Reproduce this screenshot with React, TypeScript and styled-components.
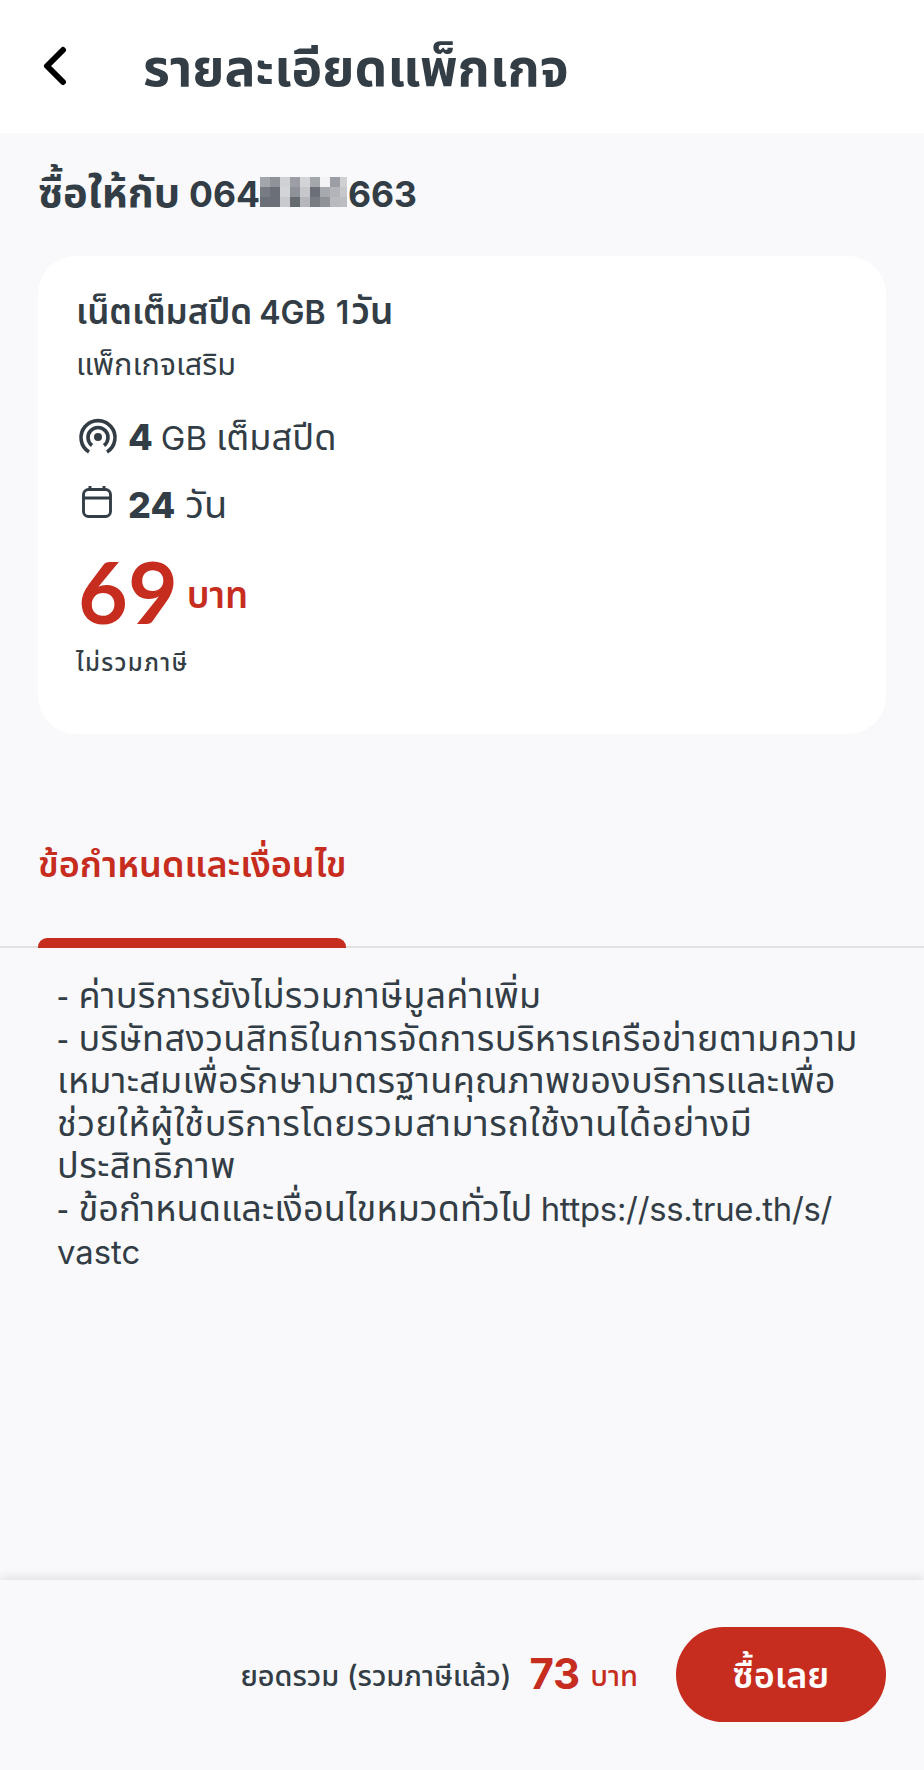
import React from "react";
import styled, { createGlobalStyle } from "styled-components";

const ink = "#333d45";
const red = "#c62d1f";
const page = "#f9f9fb";

const GlobalStyle = createGlobalStyle`
  * { box-sizing: border-box; }
  body { margin: 0; background: ${page}; }
`;

const Screen = styled.main`
  display: flex;
  flex-direction: column;
  width: 924px;
  height: 1770px;
  overflow: hidden;
  background: ${page};
  color: ${ink};
  font-family: "Inter", "Noto Sans Thai", "Noto Sans", sans-serif;
`;

const Header = styled.header`
  display: flex;
  align-items: center;
  height: 133px;
  padding: 0 40px;
  background: #fff;
`;

const BackButton = styled.button`
  display: flex;
  width: 103px;
  padding: 0 0 2px;
  border: 0;
  background: none;
`;

const Text = styled.span<{ $size: number; $track?: number; $weight?: number; $color?: string; $font?: string; $line?: number; $before?: number; $drop?: number }>`
  margin: ${(p) => p.$drop ?? 0}px 0 0 ${(p) => p.$before ?? 0}px;
  font-size: ${(p) => p.$size}px;
  line-height: ${(p) => p.$line ?? 40}px;
  letter-spacing: ${(p) => p.$track ?? 0}px;
  font-weight: ${(p) => p.$weight ?? 400};
  color: ${(p) => p.$color ?? "inherit"};
  white-space: pre;
  ${(p) => p.$font && `font-family: "${p.$font}", sans-serif;`}
`;

const Recipient = styled.h2`
  display: flex;
  align-items: baseline;
  height: 123px;
  margin: 0;
  padding: 39px 38px 0;
`;

const PhonePrefix = styled.span`
  display: flex;
  width: 222px;
  align-items: baseline;
  justify-content: space-between;
`;

const Mosaic = styled.svg`
  display: block;
  width: 87px;
  height: 30px;
  margin: 5px 1px 0 0;
  align-self: flex-start;
`;

const Card = styled.section`
  display: flex;
  flex-direction: column;
  height: 478px;
  margin: 0 38px;
  padding: 35px 38px;
  border-radius: 38px;
  background: #fff;
`;

const Row = styled.div<{ $height: number; $align?: string }>`
  display: flex;
  align-items: ${(p) => p.$align ?? "baseline"};
  height: ${(p) => p.$height}px;
`;

const IconSlot = styled.span`
  display: flex;
  align-self: flex-start;
  width: 52px;
  height: 40px;
  padding-left: 2px;
`;

const TabBar = styled.nav`
  display: flex;
  height: 214px;
  padding: 0 38px;
  border-bottom: 2px solid #e1e1e4;
`;

const Tab = styled.div`
  display: flex;
  flex-direction: column;
  justify-content: space-between;
  width: 308px;
  padding-top: 110px;
`;

const TabMarker = styled.div`
  height: 10px;
  margin-bottom: -2px;
  border-radius: 9px 9px 0 0;
  background: ${red};
`;

const Terms = styled.div`
  display: flex;
  flex-direction: column;
  flex: 1;
  padding: 26px 57px 0;
`;

const Footer = styled.footer`
  display: flex;
  align-items: flex-start;
  justify-content: flex-end;
  height: 190px;
  padding: 47px 38px 0;
  box-shadow: 0 -3px 10px rgba(0, 0, 0, 0.1);
  background: ${page};
`;

const Total = styled.div`
  display: flex;
  align-items: flex-start;
  padding-top: 27px;
  margin-right: 38px;
`;

const BuyButton = styled.button`
  width: 210px;
  height: 95px;
  padding: 0;
  border: 0;
  border-radius: 48px;
  background: ${red};
  color: #fff;
  font-family: inherit;
`;

const mosaic = [
  ["#a3a6ab", "#8f9399", "#d0d1d5", "#9b9ea4", "#d3d4d8", "#a4a7ac", "#f3f3f6", "#9b9ea4", "#cfd0d4"],
  ["#777c84", "#6b7078", "#d3d4d8", "#8f9399", "#c5c7cb", "#6b7078", "#a6a9ae", "#b2b4b9", "#c5c7cb"],
  ["#6b7078", "#6b7078", "#c9cacf", "#666b72", "#b5b7bc", "#787d84", "#8f9399", "#b8babf", "#bbbdc2"],
];

type Term = { bullet?: boolean; thai?: string; latin?: string; track?: number };

const terms: Term[] = [
  { bullet: true, thai: "ค่าบริการยังไม่รวมภาษีมูลค่าเพิ่ม", track: 0.26 },
  { bullet: true, thai: "บริษัทสงวนสิทธิในการจัดการบริหารเครือข่ายตามความ", track: 0.43 },
  { thai: "เหมาะสมเพื่อรักษามาตรฐานคุณภาพของบริการและเพื่อ", track: 0.3 },
  { thai: "ช่วยให้ผู้ใช้บริการโดยรวมสามารถใช้งานได้อย่างมี", track: 0.52 },
  { thai: "ประสิทธิภาพ", track: 0.4 },
  { bullet: true, thai: "ข้อกำหนดและเงื่อนไขหมวดทั่วไป ", latin: "https://ss.true.th/s/", track: 0.12 },
  { latin: "vastc" },
];

export default function App() {
  return (
    <Screen>
      <GlobalStyle />
      <Header>
        <BackButton aria-label="ย้อนกลับ">
          <svg width="30" height="40" viewBox="0 0 30 40" fill="none" stroke="#000" strokeWidth="6" strokeLinecap="round" strokeLinejoin="round">
            <path d="M23 4 7 20 23 36" />
          </svg>
        </BackButton>
        <Text as="h1" $size={51.8} $weight={700} $line={60}>รายละเอียดแพ็กเกจ</Text>
      </Header>
      <Recipient>
        <PhonePrefix>
          <Text $size={41.6} $weight={700}>ซื้อให้กับ</Text>
          <Text $size={35.5} $weight={700}>064</Text>
        </PhonePrefix>
        <Mosaic viewBox="0 0 87 30" shapeRendering="crispEdges">
          {mosaic.map((r, y) => r.map((c, x) => <rect key={`${x}-${y}`} x={x * 10} y={y * 10} width="10" height="10" fill={c} />))}
        </Mosaic>
        <Text $size={35.5} $weight={700}>663</Text>
      </Recipient>
      <Card>
        <Row $height={53}>
          <Text $size={35} $weight={600}>เน็ตเต็มสปีด</Text>
          <Text $size={32} $weight={600} $before={7}>4GB</Text>
          <Text $size={32} $weight={600} $before={10}>1</Text>
          <Text $size={37} $weight={600} $before={2}>วัน</Text>
        </Row>
        <Row $height={73}><Text $size={30.6}>แพ็กเกจเสริม</Text></Row>
        <Row $height={67}>
          <IconSlot>
            <svg width="40" height="38" viewBox="0 0 40 38" fill="none" stroke={ink} strokeWidth="3.6">
              <path d="M11 35A17 17 0 1 1 29 35M14 28.5A10 10 0 1 1 26 28.5" />
              <circle cx="20" cy="20" r="4" fill={ink} stroke="none" />
            </svg>
          </IconSlot>
          <Text $size={36} $weight={800}>4</Text>
          <Text $size={33} $before={8}>GB</Text>
          <Text $size={36.2} $before={9}>เต็มสปีด</Text>
        </Row>
        <Row $height={66}>
          <IconSlot>
            <svg width="40" height="38" viewBox="0 0 40 38" fill="none" stroke={ink} strokeWidth="2.9">
              <rect x="5.5" y="5.5" width="27" height="27" rx="5" />
              <path d="M5.5 14H32.5M12 2V6M26 2V6" />
            </svg>
          </IconSlot>
          <Text $size={36} $weight={800}>24</Text>
          <Text $size={38} $before={10}>วัน</Text>
        </Row>
        <Row $height={93} $align="flex-start">
          <Text $size={86} $weight={700} $font="Lato" $color={red} $line={82} $before={2}>69</Text>
          <Text $size={36.6} $weight={600} $color={red} $before={9} $drop={25}>บาท</Text>
        </Row>
        <Text $size={24} $weight={500} $track={1.35}>ไม่รวมภาษี</Text>
      </Card>
      <TabBar>
        <Tab>
          <Text $size={36} $weight={600} $color={red}>ข้อกำหนดและเงื่อนไข</Text>
          <TabMarker />
        </Tab>
      </TabBar>
      <Terms>
        {terms.map((t, i) => (
          <Row key={i} $height={42.5}>
            {t.bullet && <Text $size={35} $line={42.4} $font="Liberation Sans">- </Text>}
            {t.thai && <Text $size={36} $line={42.4} $track={t.track}>{t.thai}</Text>}
            {t.latin && <Text $size={32.8} $line={42.4} $track={t.thai ? -0.25 : 0} $before={t.thai ? -2 : 0} $drop={t.thai ? 0 : 1.5}>{t.latin}</Text>}
          </Row>
        ))}
      </Terms>
      <Footer>
        <Total>
          <Text $size={28.9} $weight={500} $drop={2}>ยอดรวม (รวมภาษีแล้ว)</Text>
          <Text $size={42} $weight={700} $color={red} $before={18}>73</Text>
          <Text $size={29} $weight={500} $color={red} $before={10} $drop={2}>บาท</Text>
        </Total>
        <BuyButton><Text $size={36} $weight={600}>ซื้อเลย</Text></BuyButton>
      </Footer>
    </Screen>
  );
}
